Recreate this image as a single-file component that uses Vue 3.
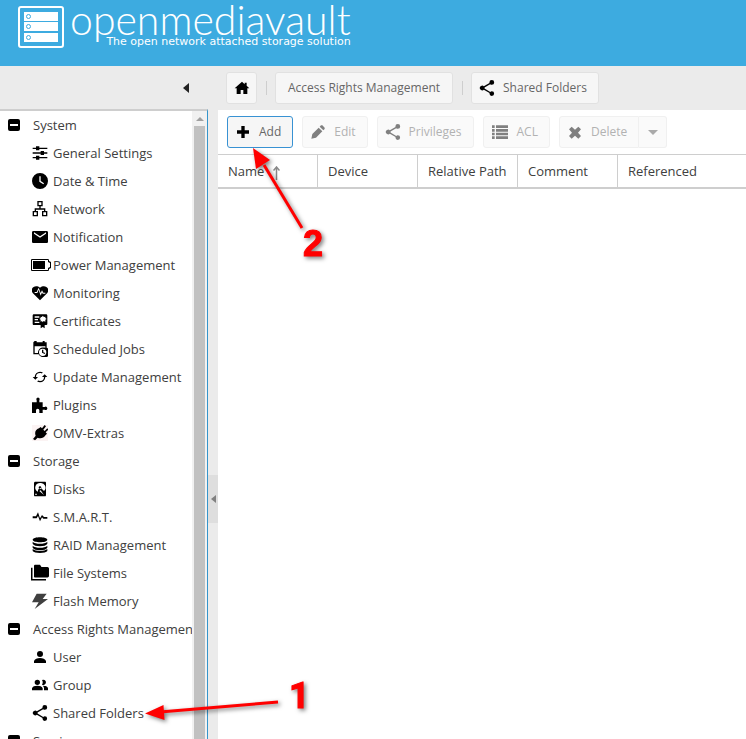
<template>
  <div class="app">
    <header class="banner">
      <svg class="logo" viewBox="0 0 46 42" aria-hidden="true">
        <rect x="1" y="1" width="44" height="40" rx="2" fill="none" stroke="#fff" stroke-width="2" />
        <g v-for="y in [6, 16, 27]" :key="y">
          <rect x="6" :y="y" width="34" height="9" fill="#fff" />
          <circle cx="10.5" :cy="y + 4.5" r="2" fill="none" stroke="#3dabe0" stroke-width="1" />
        </g>
      </svg>
      <div class="brand">
        <h1>openmediavault</h1>
        <p>The open network attached storage solution</p>
      </div>
    </header>

    <div class="body">
      <aside class="sidebar">
        <div class="sidebar-head">
          <button class="collapse" aria-label="Collapse menu">
            <svg viewBox="0 0 6 10"><path d="M6 0v10L0 5z" /></svg>
          </button>
        </div>
        <div class="tree-wrap">
          <nav class="tree">
            <template v-for="group in menu" :key="group.title">
              <button class="group">
                <svg viewBox="0 0 12 12">
                  <rect width="12" height="12" rx="2" />
                  <path d="M2 5h8v2H2z" fill="#fff" />
                </svg>
                <span>{{ group.title }}</span>
              </button>
              <a v-for="item in group.items" :key="item.label" href="#" class="item">
                <svg :class="['icon', `icon-${item.icon}`]" :viewBox="boxes[item.icon] || '0 0 24 24'">
                  <path :d="icons[item.icon]" fill-rule="evenodd" />
                </svg>
                <span>{{ item.label }}</span>
              </a>
            </template>
          </nav>
          <div class="scrollbar">
            <svg viewBox="0 0 8 4"><path d="M0 4h8L4 0z" /></svg>
            <div class="thumb"></div>
          </div>
        </div>
      </aside>

      <div class="splitter">
        <button aria-label="Toggle panel">
          <svg viewBox="0 0 5 8"><path d="M5 0v8L0 4z" /></svg>
        </button>
      </div>

      <main class="content">
        <div class="breadcrumb">
          <button class="btn home" aria-label="Home">
            <svg class="icon" viewBox="0 0 24 24"><path :d="icons.home" /></svg>
          </button>
          <i class="sep"></i>
          <button class="btn plain">Access Rights Management</button>
          <i class="sep"></i>
          <button class="btn">
            <svg class="icon" :viewBox="boxes.share"><path :d="icons.share" /></svg>
            Shared Folders
          </button>
        </div>

        <div class="toolbar">
          <button
            v-for="tool in tools"
            :key="tool.label"
            class="btn"
            :class="{ focused: !tool.disabled }"
            :disabled="tool.disabled"
          >
            <svg :class="['icon', `icon-${tool.icon}`]" :viewBox="boxes[tool.icon] || '0 0 24 24'">
              <path :d="icons[tool.icon]" />
            </svg>
            {{ tool.label }}
          </button>
          <div class="split">
            <button class="btn" disabled>
              <svg class="icon" viewBox="0 0 24 24"><path :d="icons.remove" /></svg>
              Delete
            </button>
            <button class="btn caret" disabled aria-label="Delete options">
              <svg viewBox="0 0 10 5"><path d="M0 0h10L5 5z" /></svg>
            </button>
          </div>
        </div>

        <table class="grid">
          <thead>
            <tr>
              <th v-for="column in columns" :key="column">
                {{ column }}
                <svg v-if="column === 'Name'" class="sort" viewBox="0 0 7 14">
                  <path d="M3.5 14V1M.5 4.5l3-3.5 3 3.5" />
                </svg>
              </th>
            </tr>
          </thead>
        </table>
      </main>
    </div>

    <svg class="notes" width="746" height="739" viewBox="0 0 746 739">
      <path class="line" d="M302 228L264 165" />
      <path d="M253 148L270 160 256 169z" />
      <text x="303" y="256">2</text>
      <path class="line" d="M278 702L160 712" />
      <path d="M145 713.5L163.500 705 164.500 720z" />
      <text class="one" x="289" y="708">1</text>
    </svg>
  </div>
</template>

<script setup>
const icons = {
  home: "M12 2.5L1 12.5h3V21h6v-6h4v6h6v-8.5h3l-4-3.7V4h-3v2.2z",
  share:
    "M18 16.08c-.76 0-1.44.3-1.96.77L8.91 12.7c.05-.23.09-.46.09-.7s-.04-.47-.09-.7l7.05-4.11c.54.5 1.25.81 2.04.81a3 3 0 1 0-3-3c0 .24.04.47.09.7L8.04 9.81A3 3 0 1 0 6 15c.79 0 1.5-.31 2.04-.81l7.12 4.16c-.05.21-.08.43-.08.65a2.92 2.92 0 1 0 2.92-2.92z",
  add: "M9.5 3h5v6.5H21v5h-6.5V21h-5v-6.5H3v-5h6.5z",
  edit: "M2 22l1.5-7L13 5.5l5.5 5.5L9 20.5zM14.5 4l2-2h2L22 5.5v2l-2 2z",
  list: "M0 2h4v4H0zM6 2h18v4H6zM0 7.5h4v4H0zM6 7.5h18v4H6zM0 13h4v4H0zM6 13h18v4H6zM0 18.5h4v4H0zM6 18.5h18v4H6z",
  remove: "M7 4l5 4.5L17 4l4 4-4.5 5 4.5 5-4 4-5-4.5L7 22l-4-4 4.5-5L3 8z",
  settings:
    "M1 4h5V2h5v2h12v2H11v2H6V6H1zM1 11h12V9h5v2h5v2h-5v2h-5v-2H1zM1 18h5v-2h5v2h12v2H11v2H6v-2H1z",
  clock: "M12 0a12 12 0 1 0 0 24 12 12 0 0 0 0-24zM11 5h2v7l5 3.5-1 1.5-6-4z",
  network:
    "M8 0h8v8h-3v3h7v4h3v8h-8v-8h3v-2H6v2h3v8H1v-8h3v-4h7V8H8zM10 2v4h4V2zM3 17v4h4v-4zM17 17v4h4v-4z",
  mail: "M2 3h20c1 0 2 1 2 2v14c0 1-1 2-2 2H2c-1 0-2-1-2-2V5c0-1 1-2 2-2zM3 5v2l9 6 9-6V5l-9 6z",
  battery:
    "M1 0h16c1 0 1 1 1 2l2 1v6l-2 1c0 1 0 2-1 2H1c-1 0-1-1-1-1V1c0-1 1-1 1-1zM1 1v10h16V9l2-1V4l-2-1V1zM2 2h12v8H2z",
  heart:
    "M12 23L1 12C-4 5 5-2 12 4c7-6 16 1 11 8zM4 12h4l2-5 3 9 2-5 1 2h4v-1.5h-3L15 8l-2 4-3-8-3 6.500H4z",
  certificate:
    "M3 2h18c1.500 0 2 1 2 2v12c0 1.500-1 2-2 2h-2v5l-3-2-3 2v-5H3c-1.500 0-2-1-2-2V4c0-1.500 1-2 2-2zM4 5v2h7V5zM4 9v2h5V9zM4 13v2h7v-2zM16 4l-1 2-2-.5v2L11 9l2 1v3l2-1 1 2 1.500-2 2.500 1v-3l2-1-2-1.500v-2l-2 .5z",
  schedule:
    "M4 0h3v2h9V0h3v2h3v8a7 7 0 0 1-6 14c-3 0-5-2-6-4H2V2zM4 8v10h5c0-6 4-9 11-8V8zM16 11.500a5.500 5.500 0 1 0 0 11 5.500 5.500 0 0 0 0-11zM15 13h2v4l3 1-1 1.500-4-2z",
  update:
    "M19 8l-4 4h3a6 6 0 0 1-6 6c-1 0-1.970-.25-2.800-.7l-1.460 1.460A7.930 7.930 0 0 0 12 20a8 8 0 0 0 8-8h3zM6 12a6 6 0 0 1 6-6c1 0 1.970.25 2.800.7l1.460-1.460A7.930 7.930 0 0 0 12 4a8 8 0 0 0-8 8H1l4 4 4-4z",
  plugin: "M0 8h7V5a2.500 2.500 0 1 1 4 0v3h5v7h3a2.500 2.500 0 1 1 0 4h-3v5h-5v-4a2.500 2.500 0 0 0-5 0v4H0z",
  plug: "M13 3l2 2 4-5 2 2-4 5 2 2 4-4 1.500 2-4 4 2 2-2 2c-3 5-8 6-12 4l-4 4-3-2 4-5c-2-5 0-9 5-11z",
  disk: "M5 1h14c2 0 2 1 2 2v18c0 2-1 2-2 2H5c-1 0-2 0-2-2V3c0-1 1-2 2-2zM12 3a7 7 0 0 0-5 12l2 1v-3l4-3 5 5A7 7 0 0 0 12 3zM12 8a2 2 0 1 1 0 4 2 2 0 0 1 0-4zM11 15l7 6-5-7zM5 19v2h2v-2z",
  pulse: "M1 11h5l3-6 3 9 3-5 3 3h5v2.500h-6l-2-2-3 6-3-8-2 3.500H1z",
  raid:
    "M1 4c0-5 22-5 22 0s-22 5-22 0zM1 7c4 4 18 4 22 0v3c-2 5-20 5-22 0zM1 13c4 4 18 4 22 0v3c-2 5-20 5-22 0zM1 18c4 4 18 4 22 0v3c-2 4-20 4-22 0z",
  folders: "M5 1h7l2 3h8c1 0 2 1 2 2v10c0 1-1 2-2 2H5c-1 0-1-1-1-2V2zM0 5h2v15h18v2H0z",
  flash: "M7 1h15l-6 8h8L4 24l6-10H0z",
  user: "M12 3a4.500 4.500 0 1 1 0 9 4.500 4.500 0 0 1 0-9zM3 21v-3c2-6 16-6 18 0v3z",
  group:
    "M8 4a4 4 0 1 1 0 8 4 4 0 0 1 0-8zM17 4a4 4 0 1 1-2 7.500c2-3 1-5 0-7zM0 20v-3c1-5 15-5 16 0v3zM16 13c4 0 8 1 8 4v3h-6v-3c0-2-1-3-2-4z",
};

// icons whose artwork does not fill the usual 24x24 box
const boxes = {
  share: "2 2 20 20",
  battery: "0 0 20 12",
};

const menu = [
  {
    title: "System",
    items: [
      { label: "General Settings", icon: "settings" },
      { label: "Date & Time", icon: "clock" },
      { label: "Network", icon: "network" },
      { label: "Notification", icon: "mail" },
      { label: "Power Management", icon: "battery" },
      { label: "Monitoring", icon: "heart" },
      { label: "Certificates", icon: "certificate" },
      { label: "Scheduled Jobs", icon: "schedule" },
      { label: "Update Management", icon: "update" },
      { label: "Plugins", icon: "plugin" },
      { label: "OMV-Extras", icon: "plug" },
    ],
  },
  {
    title: "Storage",
    items: [
      { label: "Disks", icon: "disk" },
      { label: "S.M.A.R.T.", icon: "pulse" },
      { label: "RAID Management", icon: "raid" },
      { label: "File Systems", icon: "folders" },
      { label: "Flash Memory", icon: "flash" },
    ],
  },
  {
    title: "Access Rights Management",
    items: [
      { label: "User", icon: "user" },
      { label: "Group", icon: "group" },
      { label: "Shared Folders", icon: "share" },
    ],
  },
  { title: "Services", items: [] },
];

const tools = [
  { label: "Add", icon: "add", disabled: false },
  { label: "Edit", icon: "edit", disabled: true },
  { label: "Privileges", icon: "share", disabled: true },
  { label: "ACL", icon: "list", disabled: true },
];

const columns = ["Name", "Device", "Relative Path", "Comment", "Referenced"];
</script>

<style>
body {
  margin: 0;
}
</style>

<style scoped>
.app {
  position: relative;
  display: flex;
  flex-direction: column;
  height: 100vh;
  overflow: hidden;
  background: #fff;
  color: #404040;
  font: 13px/20px "Open Sans", sans-serif;
}

.app * {
  box-sizing: border-box;
}

button {
  margin: 0;
  padding: 0;
  border: 0;
  background: none;
  color: inherit;
  font: inherit;
}

svg {
  display: block;
  flex: none;
}

.icon {
  width: 16px;
  height: 16px;
}

.banner {
  display: flex;
  flex: none;
  gap: 6px;
  height: 66px;
  padding: 6px 18px;
  background: #3dabe0;
  color: #fff;
}

.logo {
  width: 46px;
  height: 42px;
}

.brand h1 {
  margin: 0 0 2px;
  font: 300 41px/28px Lato, sans-serif;
}

.brand p {
  margin: 0;
  font: 11px/12px "DejaVu Sans", sans-serif;
  text-align: right;
}

.body {
  display: flex;
  flex: 1;
  min-height: 0;
  background: #ebebeb;
}

.sidebar {
  display: flex;
  flex: none;
  flex-direction: column;
  width: 208px;
}

.sidebar-head {
  display: flex;
  flex: none;
  align-items: center;
  justify-content: flex-end;
  height: 43px;
  padding-right: 19px;
}

.collapse svg {
  width: 6px;
  height: 10px;
  fill: #222;
}

.tree-wrap {
  display: flex;
  flex: 1;
  min-height: 0;
  border-top: 2px solid #cecece;
  border-right: 1px solid #3595cc;
  background: #fff;
}

.tree {
  flex: 1;
  min-width: 0;
  overflow: hidden;
}

.group,
.item {
  display: flex;
  align-items: center;
  width: 100%;
  height: 28px;
  color: #404040;
  text-decoration: none;
  white-space: nowrap;
}

.group {
  gap: 13px;
  padding-left: 8px;
}

.group svg {
  width: 12px;
  height: 12px;
}

.item {
  gap: 5px;
  padding-left: 32px;
}

.icon-battery {
  width: 20px;
  margin: 0 -3px 0 -1px;
}

.icon-folders,
.icon-list {
  width: 18px;
}

.icon-folders {
  height: 18px;
  margin: 0 -1px;
}

.icon-flash {
  fill: #404040;
}

.icon-plug {
  background: #fbf3f3;
}

.scrollbar {
  display: flex;
  flex: none;
  flex-direction: column;
  align-items: center;
  gap: 5px;
  width: 15px;
  padding-top: 6px;
  background: #f1f1f1;
}

.scrollbar svg {
  width: 8px;
  height: 4px;
  fill: #a0a0a0;
}

.thumb {
  flex: 1;
  width: 11px;
  background: #c1c1c1;
}

.splitter {
  display: flex;
  flex: none;
  align-items: center;
  width: 10px;
  padding-top: 193px;
}

.splitter button {
  display: flex;
  align-items: center;
  justify-content: center;
  width: 10px;
  height: 48px;
  background: #dedede;
}

.splitter svg {
  width: 5px;
  height: 8px;
  fill: #808080;
}

.content {
  flex: 1;
  min-width: 0;
  background: #fff;
}

.breadcrumb,
.toolbar {
  display: flex;
  align-items: center;
  height: 44px;
}

.breadcrumb {
  gap: 8px;
  padding-left: 8px;
  background: #ebebeb;
}

.toolbar {
  gap: 9px;
  padding-left: 9px;
}

.sep {
  width: 2px;
  height: 14px;
  border-right: 1px solid #cecece;
}

.btn {
  display: flex;
  align-items: center;
  gap: 8px;
  height: 32px;
  padding: 0 11px 0 7px;
  border: 1px solid #e1e1e1;
  border-radius: 3px;
  background: #f6f6f6;
  color: #666;
  font-size: 12px;
  white-space: nowrap;
}

.btn .icon {
  fill: #000;
}

.btn.home {
  justify-content: center;
  width: 31px;
  padding: 0;
}

.btn.plain {
  padding: 0 12px;
}

.btn.focused {
  border-color: #3892d3;
}

.btn:disabled {
  border-color: #f0f0f0;
  background: #fafafa;
  color: #b2b2b2;
}

.btn:disabled .icon {
  fill: #808080;
}

.split {
  display: flex;
}

.split .btn:first-child {
  border-radius: 3px 0 0 3px;
}

.split .caret {
  justify-content: center;
  width: 28px;
  padding: 0;
  border-left: 0;
  border-radius: 0 3px 3px 0;
}

.caret svg {
  width: 10px;
  height: 5px;
  fill: #aaa;
}

.grid {
  width: 100%;
  border-top: 1px solid #cecece;
  border-bottom: 2px solid #cecece;
  border-spacing: 0;
  table-layout: fixed;
}

.grid th {
  width: 100px;
  height: 32px;
  padding: 0 0 0 10px;
  border-right: 1px solid #cecece;
  font-weight: 400;
  text-align: left;
  white-space: nowrap;
}

.grid th:last-child {
  width: auto;
  border-right: 0;
}

.sort {
  display: inline-block;
  width: 7px;
  height: 14px;
  margin-left: 5px;
  vertical-align: middle;
  fill: none;
  stroke: #888;
  stroke-width: 1.5;
}

/* Numbered step markers drawn over the page */
.notes {
  position: absolute;
  top: 0;
  left: 0;
  pointer-events: none;
  fill: #f00;
  filter: drop-shadow(2px 2px 2px rgba(0, 0, 0, 0.5));
}

.notes .line {
  stroke: #f00;
  stroke-width: 3;
}

.notes text {
  font: bold 36px "Liberation Sans", Arial, sans-serif;
  stroke: #f00;
  stroke-width: 1;
}

.notes .one {
  font-family: Roboto, sans-serif;
}
</style>
